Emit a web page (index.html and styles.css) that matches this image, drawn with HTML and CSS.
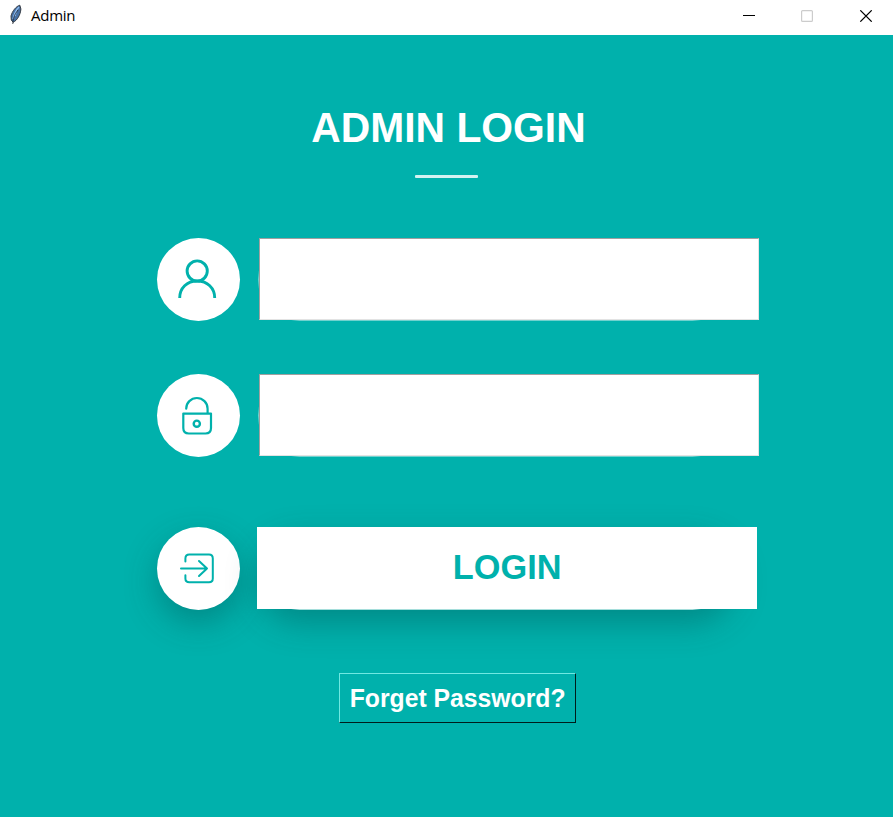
FILE: index.html
```
<!DOCTYPE html>
<html lang="en">
<head>
<meta charset="utf-8">
<title>Admin</title>
<link rel="stylesheet" href="styles.css">
</head>
<body>
<header class="titlebar">
  <svg class="feather" width="14" height="22" viewBox="0 0 14 22">
    <path d="M10.8 1.2C7.3 2.2 3.2 7 2 12L2.3 16L4.2 18.3C8.3 16.2 11.4 11 11.9 5Z" fill="#456fa3" stroke="#353b44" stroke-width="1"/>
    <path d="M10 3C7 6 5 11 4 15M8 5L6 12" stroke="#91bdf0" stroke-width="1.3" fill="none"/>
    <path d="M9 6C5 11 4 15 3.8 20" stroke="#20252d" stroke-width=".8" fill="none"/>
  </svg>
  <span class="caption">Admin</span>
  <svg class="controls" width="130" height="12" viewBox="0 0 130 12">
    <path d="M0 5.5H12" stroke="#000"/>
    <rect x="58.6" y=".6" width="10.8" height="10.8" rx="1" fill="none" stroke="#ccc" stroke-width="1.2"/>
    <path d="M117.3.3L128.7 11.7M128.7.3L117.3 11.7" stroke="#000" stroke-width="1.2"/>
  </svg>
</header>
<main class="login">
  <h1>ADMIN LOGIN</h1>
  <div class="rule"></div>
  <div class="row">
    <div class="badge">
      <svg width="83" height="83" viewBox="0 0 83 83" fill="none" stroke="#00b1ac" stroke-width="2.9">
        <circle cx="40.2" cy="33" r="10.1"/><path d="M22.7 60C22.7 50 30 43 40.2 43S57.7 50 57.7 60"/>
      </svg>
    </div>
    <div class="slot"><input class="field" type="text" aria-label="Username"></div>
  </div>
  <div class="row row-password">
    <div class="badge">
      <svg width="83" height="83" viewBox="0 0 83 83" fill="none" stroke="#00b1ac" stroke-width="2.2">
        <path d="M29.2 34.7A10.7 10.7 0 1 1 50.6 34.7V39" stroke-linecap="round"/>
        <path d="M26.3 39.6H54V54Q54 59.5 48.5 59.5H31.8Q26.3 59.5 26.3 54Z" stroke-linejoin="round"/><circle cx="39.8" cy="49.7" r="3.1" stroke-width="2.4"/>
      </svg>
    </div>
    <div class="slot"><input class="field" type="password" aria-label="Password"></div>
  </div>
  <div class="row row-submit">
    <div class="badge raised">
      <svg width="83" height="83" viewBox="0 0 83 83" fill="none" stroke="#00b1ac" stroke-width="2" stroke-linecap="round" stroke-linejoin="round">
        <path d="M28.4 34.5V31.5Q28.4 27.6 32.3 27.6H52Q55.8 27.6 55.8 31.5V51.5Q55.8 55.3 52 55.3H32.3Q28.4 55.3 28.4 51.5V48.3M24 41.5H50M42 34L50 41.5L42 49"/>
      </svg>
    </div>
    <div class="slot raised"><button class="submit" type="button"><span class="label">LOGIN</span></button></div>
  </div>
  <button class="forgot" type="button"><span class="label">Forget Password?</span></button>
</main>
</body>
</html>
```
FILE: styles.css
```
* { box-sizing: border-box; }
body {
  margin: 0;
  height: 817px;
  overflow: hidden;
  background: #00b1ac;
  font-family: "Liberation Sans", Arial, sans-serif;
}
.titlebar {
  display: flex;
  align-items: flex-start;
  height: 35px;
  padding-left: 9px;
  background: #fff;
}
.feather { margin-top: 4px; }
.caption {
  margin: 5px 0 0 8px;
  font: 15px/20px "Open Sans", "Noto Sans", sans-serif;
  letter-spacing: -.25px;
  color: #000;
}
.controls { margin: 10px 20px 0 auto; }
.login {
  display: flex;
  flex-direction: column;
  height: 782px;
  padding: 69px 0 0 157px;
}
h1 {
  width: 583px;
  margin: 0;
  text-align: center;
  font-size: 42.5px;
  line-height: 48px;
  color: #fff;
  transform: scaleX(.96);
}
.rule {
  width: 63px;
  height: 3px;
  margin: 23px 0 59.5px 258px;
  border-radius: 1px;
  background: #d3f2f1;
}
.row {
  display: flex;
  gap: 18px;
  height: 83px;
}
.row-password { margin-top: 53.5px; }
.row-submit { margin-top: 70px; }
.badge {
  width: 83px;
  height: 83px;
  border-radius: 50%;
  background: #fff;
}
.badge svg { display: block; }
.slot {
  width: 476px;
  height: 83px;
  border-radius: 42px;
  background: #70d2cf;
}
.raised { box-shadow: 0 13px 32px rgba(0, 65, 65, .35); }
.slot.raised { background: #a5dedb; }
.badge.raised { background: #fff; }
.field {
  display: block;
  width: 500px;
  height: 82px;
  margin-left: 1px;
  padding: 0 20px;
  border: 1px solid;
  border-color: #a0a0a0 #e3e3e3 #e3e3e3 #a0a0a0;
  outline: 0;
  background: #fff;
  font: 28px "Liberation Sans", Arial, sans-serif;
}
.submit {
  display: block;
  width: 500px;
  height: 82px;
  margin-left: -1px;
  padding: 0 0 1px;
  border: 0;
  background: #fff;
  color: #00b1ac;
  font: bold 35.5px "Liberation Sans", Arial, sans-serif;
}
.label {
  display: inline-block;
  transform: scaleX(.967);
}
.forgot {
  width: 237px;
  height: 50px;
  margin: 62.5px 0 0 182px;
  padding: 1px 0 0;
  border: 1px solid;
  border-color: #70e8e2 #001c1b #001c1b #70e8e2;
  background: #00b1ac;
  color: #fff;
  font: bold 25.6px "Liberation Sans", Arial, sans-serif;
  white-space: nowrap;
}
```
